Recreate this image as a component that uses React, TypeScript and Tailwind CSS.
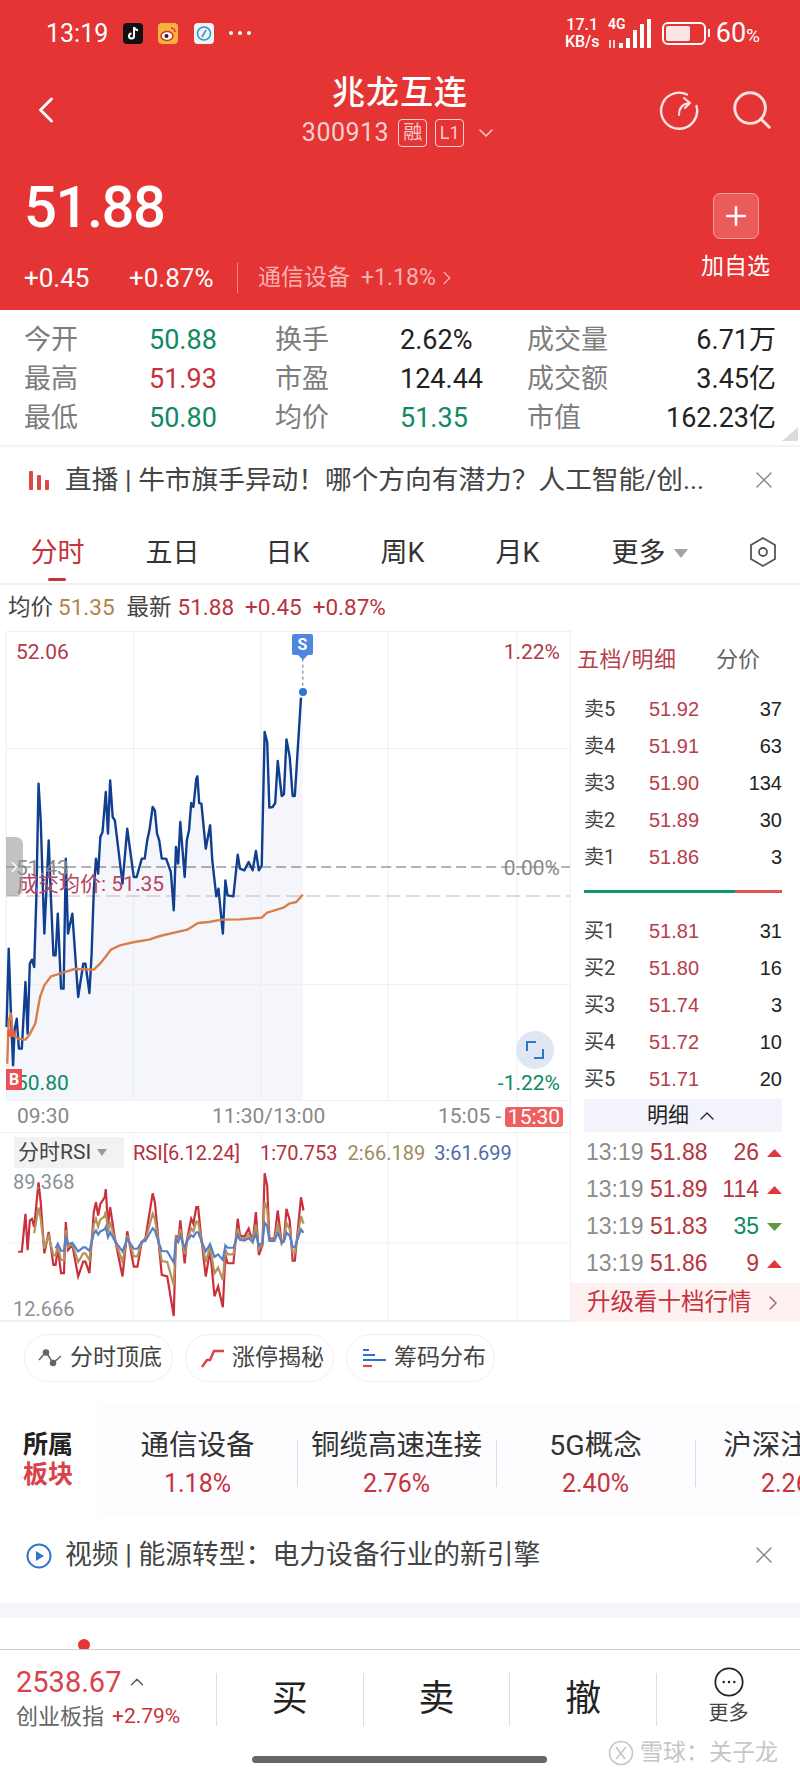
import { ChevronDown, ChevronLeft, ChevronRight, ChevronUp, Plus, Search, X } from "lucide-react";

const stats = [
  ["今开", "50.88", "text-[#0f8a62]", "换手", "2.62%", "text-[#222]", "成交量", "6.71万"],
  ["最高", "51.93", "text-[#c5333d]", "市盈", "124.44", "text-[#222]", "成交额", "3.45亿"],
  ["最低", "50.80", "text-[#0f8a62]", "均价", "51.35", "text-[#0f8a62]", "市值", "162.23亿"],
];

const tabs = ["分时", "五日", "日K", "周K", "月K"];

const sells = [
  ["卖5", "51.92", "37"],
  ["卖4", "51.91", "63"],
  ["卖3", "51.90", "134"],
  ["卖2", "51.89", "30"],
  ["卖1", "51.86", "3"],
];

const buys = [
  ["买1", "51.81", "31"],
  ["买2", "51.80", "16"],
  ["买3", "51.74", "3"],
  ["买4", "51.72", "10"],
  ["买5", "51.71", "20"],
];

const ticks = [
  { price: "51.88", qty: "26", up: true },
  { price: "51.89", qty: "114", up: true },
  { price: "51.83", qty: "35", up: false },
  { price: "51.86", qty: "9", up: true },
];

const boards = [
  ["通信设备", "1.18%"],
  ["铜缆高速连接", "2.76%"],
  ["5G概念", "2.40%"],
  ["沪深注册制", "2.26%"],
];

// traced from the chart, in viewBox units
const priceLine =
  "18,1220 24,985 30,1180 36,1335 40,1230 46,1195 52,1285 60,1285 70,1085 76,1240 82,1030 88,1018 94,1040 100,830 106,490 112,600 122,940 134,660 140,830 147,1005 153,1005 159,880 168,1105 175,1105 181,715 187,940 199,880 215,1130 229,1030 235,1030 246,1118 252,1000 258,810 264,715 270,760 276,650 282,635 291,515 297,640 303,480 310,590 316,600 337,790 350,625 368,770 376,770 390,715 398,715 405,660 411,630 420,560 426,570 432,640 438,660 445,715 457,715 470,755 478,870 484,680 490,730 496,605 508,770 514,660 520,630 526,548 532,560 540,475 543,468 548,548 554,550 566,685 578,615 584,720 595,828 601,805 613,940 620,780 626,825 642,828 654,703 660,745 672,750 684,725 695,750 704,692 712,750 720,735 728,335 735,365 741,562 750,560 757,548 764,422 775,527 781,522 788,357 797,410 805,527 811,527 828,232";

const avgLine =
  "20,1330 24,1200 30,1180 36,1245 50,1255 70,1258 80,1245 97,1210 110,1130 122,1095 140,1068 165,1060 205,1046 258,1048 275,1030 290,1010 305,988 330,975 370,965 410,958 440,947 515,928 545,908 575,905 610,898 660,897 720,892 735,877 780,862 795,850 815,845 833,823";

const rsiRed: [number, number][] = [
  [50, 460], [60, 460], [70, 345], [76, 455], [82, 365], [88, 360], [94, 385], [106, 250], [112, 310], [122, 465], [134, 400], [147, 500], [153, 500], [159, 450], [168, 525], [176, 525], [181, 370], [187, 455], [199, 440], [215, 535], [229, 490], [235, 490], [246, 525], [258, 340], [264, 310], [270, 350], [276, 315], [288, 295], [291, 270], [297, 380], [303, 325], [316, 420], [337, 535], [350, 398], [368, 505], [378, 505], [390, 430], [400, 420], [420, 283], [426, 310], [438, 450], [445, 530], [460, 535], [478, 655], [484, 410], [490, 430], [496, 365], [508, 495], [514, 425], [526, 360], [532, 375], [540, 325], [545, 325], [554, 420], [566, 535], [578, 455], [590, 595], [600, 565], [613, 628], [620, 470], [626, 495], [642, 495], [654, 360], [660, 410], [672, 415], [684, 390], [695, 430], [704, 340], [712, 470], [722, 440], [728, 222], [735, 260], [741, 420], [755, 420], [764, 335], [775, 435], [781, 425], [788, 330], [797, 365], [805, 487], [811, 487], [828, 295], [835, 335],
];

const damp = (from: number, k: number) =>
  rsiRed
    .filter(([x]) => x >= from)
    .map(([x, y]) => `${x},${Math.round(430 + (y - 430) * k)}`)
    .join(" ");

const Row = ({ label, price, qty }: { label: string; price: string; qty: string }) => (
  <div className="flex items-center h-[37px] text-[20px] pl-[13px] pr-[18px]">
    <span className="w-[65px] text-[#444]">{label}</span>
    <span className="text-[#b83d4a] font-['Liberation_Sans','Noto_Sans_CJK_SC',sans-serif]">{price}</span>
    <span className="ml-auto text-[#222] font-['Liberation_Sans','Noto_Sans_CJK_SC',sans-serif]">{qty}</span>
  </div>
);

const App = () => {
  return (
    <div className="w-[800px] h-[1778px] overflow-hidden bg-white relative font-['Roboto','Noto_Sans_CJK_SC',sans-serif]">
      {/* red header */}
      <div className="h-[310px] bg-[#e43434] text-white flex flex-col">
        <div className="h-[66px] flex items-center pl-[46px] pr-[40px]">
          <span className="text-[25px] leading-none w-[77px]">13:19</span>
          <svg width="20" height="21" viewBox="0 0 20 21" className="mr-[15px]">
            <rect width="20" height="21" rx="4" fill="#111" />
            <path d="M11 4v9a2.5 2.5 0 1 1-2.5-2.5M11 4c.5 2 2 3 4 3.2" fill="none" stroke="#fff" strokeWidth="2" />
          </svg>
          <svg width="20" height="21" viewBox="0 0 20 21" className="mr-[16px]">
            <rect width="20" height="21" rx="4" fill="#f6b33c" />
            <ellipse cx="9" cy="13" rx="6" ry="4.5" fill="#fff" stroke="#d8332a" strokeWidth="1.5" />
            <circle cx="8.5" cy="13" r="2" fill="#222" />
            <path d="M13 5a4 4 0 0 1 4 4" fill="none" stroke="#d8332a" strokeWidth="1.5" />
          </svg>
          <svg width="20" height="21" viewBox="0 0 20 21" className="mr-[15px]">
            <rect width="20" height="21" rx="4" fill="#eef4f8" />
            <circle cx="10" cy="10.5" r="6.5" fill="none" stroke="#3f93c4" strokeWidth="1.6" />
            <path d="M8 14l4-7" stroke="#3f93c4" strokeWidth="1.6" />
          </svg>
          <div className="flex gap-[5px]">
            <span className="w-[4px] h-[4px] rounded-full bg-white" />
            <span className="w-[4px] h-[4px] rounded-full bg-white" />
            <span className="w-[4px] h-[4px] rounded-full bg-white" />
          </div>
          <div className="ml-auto flex items-center">
            <div className="text-[16px] leading-[17px] font-medium text-center w-[37px]">
              <div>17.1</div>
              <div>KB/s</div>
            </div>
            <svg width="46" height="34" viewBox="0 0 46 34" className="ml-[6px] mr-[9px]">
              <text x="1" y="13" fontSize="14" fontWeight="600" fill="#fff">4G</text>
              <path d="M3 24v8M7 24v8" stroke="#fff" strokeWidth="1.6" />
              <rect x="12" y="27" width="4" height="5" fill="#fff" />
              <rect x="19" y="22" width="4" height="10" fill="#fff" />
              <rect x="26" y="14" width="4" height="18" fill="#fff" />
              <rect x="33" y="8" width="4" height="24" fill="#fff" />
              <rect x="40" y="3" width="4" height="29" fill="#fff" />
            </svg>
            <div className="w-[44px] h-[23px] rounded-[6px] border-2 border-white p-[2px]">
              <div className="h-full w-[24px] rounded-[2px] bg-[#fbe6e6]" />
            </div>
            <span className="w-[2px] h-[8px] bg-white ml-[2px]" />
            <span className="text-[27px] leading-none ml-[6px]">60</span>
            <span className="text-[19px] leading-none mt-[4px]">%</span>
          </div>
        </div>

        <div className="h-[88px] flex items-center relative">
          <ChevronLeft size={44} strokeWidth={1.6} className="ml-[24px]" />
          <div className="absolute left-0 right-0 top-0 flex flex-col items-center pt-[7px]">
            <div className="text-[33px] leading-[40px] tracking-[1px] font-medium">兆龙互连</div>
            <div className="flex items-center mt-[5px] text-[#f8cfcf]">
              <span className="text-[25px] leading-[30px] tracking-[0.5px]">300913</span>
              <span className="ml-[9px] w-[29px] h-[28px] rounded-[4px] border border-[#f8cfcf] text-[19px] leading-[26px] text-center">融</span>
              <span className="ml-[8px] w-[29px] h-[28px] rounded-[4px] border border-[#f8cfcf] text-[18px] leading-[26px] text-center">L1</span>
              <ChevronDown size={24} strokeWidth={1.5} className="ml-[10px]" />
            </div>
          </div>
          <div className="ml-auto flex items-center gap-[29px] pr-[25px]">
            <svg width="42" height="42" viewBox="0 0 42 42" fill="none" stroke="#fbe3e3" strokeWidth="2.4" strokeLinecap="round">
              <path d="M29 5.5A18 18 0 1 0 38.5 17" />
              <path d="M21 26c0-7 3-11 10-12M26 9l6 5-5 5" strokeWidth="2" />
            </svg>
            <Search size={46} strokeWidth={1.5} color="#fbe3e3" />
          </div>
        </div>

        <div className="flex-1 flex justify-between pl-[24px] pr-[30px]">
          <div>
            <div className="text-[58px] leading-[60px] mt-[23px] font-medium tracking-[-1.5px]">51.88</div>
            <div className="flex items-center mt-[26px] h-[30px]">
              <span className="text-[26px] w-[105px]">+0.45</span>
              <span className="text-[26px] w-[108px]">+0.87%</span>
              <span className="w-px h-[30px] bg-[#f18787] mr-[20px]" />
              <span className="text-[23px] text-[#f7b1b1] mr-[11px]">通信设备</span>
              <span className="text-[23px] text-[#f7b1b1]">+1.18%</span>
              <ChevronRight size={22} strokeWidth={1.5} color="#f7b1b1" />
            </div>
          </div>
          <div className="flex flex-col items-center mt-[39px]">
            <div className="w-[46px] h-[46px] rounded-[7px] bg-[#ec5b5b] border border-[#f49c9c] flex items-center justify-center">
              <Plus size={30} strokeWidth={2} />
            </div>
            <span className="text-[23px] leading-[30px] mt-[13px]">加自选</span>
          </div>
        </div>
      </div>

      {/* stats */}
      <div className="h-[137px] relative border-b-2 border-[#f4f4f4] pt-[11px] pl-[24px] pr-[24px] grid grid-cols-[125px_126px_125px_127px_100px_1fr] auto-rows-[39px] text-[27px] items-center">
        {stats.map((s) => (
          <div key={s[0]} className="contents">
            <span className="text-[#7d7d7d]">{s[0]}</span>
            <span className={s[2]}>{s[1]}</span>
            <span className="text-[#7d7d7d]">{s[3]}</span>
            <span className={s[5]}>{s[4]}</span>
            <span className="text-[#7d7d7d] whitespace-nowrap">{s[6]}</span>
            <span className="text-right text-[#222] whitespace-nowrap">{s[7]}</span>
          </div>
        ))}
        <svg width="16" height="14" className="absolute right-[2px] bottom-[4px]">
          <path d="M16 0V14H0Z" fill="#d9dcdf" />
        </svg>
      </div>

      {/* live banner */}
      <div className="h-[73px] flex items-start pt-[16px] pl-[28px] pr-[22px]">
        <svg width="22" height="26" viewBox="0 0 22 26" className="mr-[15px] mt-[3px]" fill="#d94a46">
          <rect x="1" y="5" width="4" height="19" rx="1" />
          <rect x="9" y="9" width="4" height="15" rx="1" />
          <rect x="17" y="14" width="4" height="10" rx="1" />
        </svg>
        <span className="text-[26.7px] leading-[34px] text-[#444] whitespace-nowrap">直播 | 牛市旗手异动！哪个方向有潜力？人工智能/创...</span>
        <X size={28} strokeWidth={1.3} color="#8a8a8a" className="ml-auto mt-[3px]" />
      </div>

      {/* period tabs */}
      <div className="h-[65px] relative border-b-2 border-[#f2f2f2] flex items-center pt-[3px] text-[27px] text-[#333]">
        {tabs.map((t, i) => (
          <div key={t} className={`w-[115px] text-center relative ${i === 0 ? "text-[#c8323c]" : ""}`}>
            {t}
          </div>
        ))}
        <div className="w-[115px] flex items-center justify-center pl-[34px] whitespace-nowrap">
          更多
          <svg width="14" height="10" className="ml-[8px]">
            <path d="M0 1H14L7 10Z" fill="#a3a3a3" />
          </svg>
        </div>
        <svg width="28" height="32" viewBox="0 0 28 32" fill="none" stroke="#555" strokeWidth="1.8" className="absolute right-[23px] top-[16px]">
          <path d="M14 2l12 7v14l-12 7-12-7V9Z" />
          <circle cx="14" cy="16" r="4" />
        </svg>
        <span className="absolute left-[48px] bottom-[2px] w-[18px] h-[3px] rounded-full bg-[#c8323c]" />
      </div>

      {/* quote line */}
      <div className="h-[46px] flex items-center pl-[8px] text-[22.5px] whitespace-nowrap">
        <span className="text-[#444] mr-[5px]">均价</span>
        <span className="text-[#b5834d] mr-[12px]">51.35</span>
        <span className="text-[#444] mr-[6px]">最新</span>
        <span className="text-[#b8343e] mr-[11px]">51.88</span>
        <span className="text-[#b8343e] mr-[11px]">+0.45</span>
        <span className="text-[#b8343e]">+0.87%</span>
      </div>

      <div className="flex h-[691px]">
        {/* charts */}
        <div className="w-[570px] flex flex-col">
          <div className="h-[470px] relative">
            <svg className="absolute inset-0 w-full h-full" viewBox="0 32 1568 1410" preserveAspectRatio="none">
              <polygon points={`18,1440 ${priceLine} 833,232 833,1440`} fill="#f5f6fc" />
              <g stroke="#eceef2" strokeWidth="1">
                <path d="M17 34H1568M17 385H1568M17 1093H1568M17 1441H1568M17 34V1441" vectorEffect="non-scaling-stroke" />
                <path d="M367 34V1441M718 34V1441M1068 34V1441M1422 34V1441" vectorEffect="non-scaling-stroke" />
              </g>
              <path d="M17 740H1568" stroke="#666" strokeDasharray="10 5" fill="none" vectorEffect="non-scaling-stroke" />
              <path d="M17 827H1568" stroke="#c9b3b8" strokeDasharray="14 6" fill="none" vectorEffect="non-scaling-stroke" />
              <polyline points={priceLine} fill="none" stroke="#113f8f" strokeWidth="2.4" strokeLinejoin="round" vectorEffect="non-scaling-stroke" />
              <polyline points={avgLine} fill="none" stroke="#d9804a" strokeWidth="2.4" strokeLinejoin="round" vectorEffect="non-scaling-stroke" />
              <path d="M833 115V200" stroke="#5b6f92" strokeDasharray="3 3" fill="none" vectorEffect="non-scaling-stroke" />
            </svg>

            <span className="absolute left-[16px] top-[9px] text-[21px] leading-[24px] text-[#b03a48]">52.06</span>
            <span className="absolute right-[10px] top-[9px] text-[21px] leading-[24px] text-[#b03a48]">1.22%</span>
            <span className="absolute left-[16px] top-[225px] text-[21px] leading-[24px] text-[#8a8a8a]">51.43</span>
            <span className="absolute right-[10px] top-[225px] text-[21px] leading-[24px] text-[#8a8a8a]">0.00%</span>
            <span className="absolute left-[17px] top-[241px] text-[21px] leading-[24px] text-[#b8445f]">成交均价: 51.35</span>
            <span className="absolute left-[16px] top-[440px] text-[21px] leading-[24px] text-[#0f8a62]">50.80</span>
            <span className="absolute right-[10px] top-[440px] text-[21px] leading-[24px] text-[#0f8a62]">-1.22%</span>

            {/* collapse handle */}
            <div className="absolute left-[6px] top-[206px] w-[17px] h-[59px] rounded-r-[7px] bg-[#9a9a9a]/60 flex items-center justify-center">
              <ChevronRight size={20} strokeWidth={2} color="#fff" />
            </div>

            {/* S marker */}
            <div className="absolute left-[292px] top-[3px] w-[21px] h-[21px] rounded-[2px] bg-[#4f86e0] text-white text-[16px] leading-[21px] font-bold text-center">S</div>
            <svg width="10" height="5" className="absolute left-[298px] top-[24px]">
              <path d="M0 0H10L5 5Z" fill="#4f86e0" />
            </svg>
            <span className="absolute left-[299px] top-[57px] w-[8px] h-[8px] rounded-full bg-[#2a76d2]" />

            {/* B marker */}
            <span className="absolute left-[7px] top-[398px] w-[8px] h-[8px] rounded-full bg-[#ee5a3a]" />
            <div className="absolute left-[6px] top-[438px] w-[16px] h-[21px] bg-[#ec4f55] text-white text-[16px] leading-[21px] font-bold text-center">B</div>

            {/* expand button */}
            <div className="absolute left-[516px] top-[400px] w-[38px] h-[38px] rounded-full bg-[#dfe7f5] flex items-center justify-center">
              <svg width="20" height="20" viewBox="0 0 20 20" fill="none" stroke="#2f78c8" strokeWidth="2">
                <path d="M11 2H2V11M18 9V18H9" />
              </svg>
            </div>
          </div>

          <div className="h-[32px] flex items-center pl-[17px] pr-[7px] text-[21px] text-[#888] border-b border-[#eceef2]">
            <span className="w-[195px]">09:30</span>
            <span className="w-[226px]">11:30/13:00</span>
            <span>15:05 -</span>
            <span className="ml-auto w-[58px] h-[20px] rounded-[3px] bg-[#ee6060] text-white text-center leading-[20px]">15:30</span>
          </div>

          <div className="flex-1 relative border-b-2 border-[#eef0f3]">
            <svg className="absolute inset-0 w-full h-full" viewBox="0 100 1568 567" preserveAspectRatio="none">
              <path d="M367 100V667M718 100V667M1068 100V667M1422 100V667M17 433H1568" stroke="#f0f1f4" fill="none" vectorEffect="non-scaling-stroke" />
              <polyline points={rsiRed.map((p) => p.join(",")).join(" ")} fill="none" stroke="#c9303a" strokeWidth="2.2" vectorEffect="non-scaling-stroke" />
              <polyline points={damp(94, 0.58)} fill="none" stroke="#b5925c" strokeWidth="2.2" vectorEffect="non-scaling-stroke" />
              <polyline points={damp(153, 0.28)} fill="none" stroke="#5a7fc6" strokeWidth="2.2" vectorEffect="non-scaling-stroke" />
            </svg>
            <div className="relative flex items-center pt-[4px] text-[20px] whitespace-nowrap">
              <div className="ml-[14px] w-[110px] h-[31px] bg-[#f2f2f2] flex items-center pl-[4px] text-[21px] text-[#444]">
                分时RSI
                <svg width="10" height="7" className="ml-[6px]">
                  <path d="M0 0H10L5 7Z" fill="#999" />
                </svg>
              </div>
              <span className="ml-[9px] text-[#b53040]">RSI[6.12.24]</span>
              <span className="ml-[20px] text-[#b53040]">1:70.753</span>
              <span className="ml-[10px] text-[#a08a60]">2:66.189</span>
              <span className="ml-[9px] text-[#4f6ca8]">3:61.699</span>
            </div>
            <span className="absolute left-[13px] top-[37px] text-[20px] leading-[24px] text-[#8a9097]">89.368</span>
            <span className="absolute left-[13px] top-[164px] text-[20px] leading-[24px] text-[#8a9097]">12.666</span>
          </div>
        </div>

        {/* order book */}
        <div className="flex-1 flex flex-col border-l border-[#eceef2]">
          <div className="h-[53px] flex items-center pl-[6px] text-[22px] pt-[4px]">
            <span className="text-[#b8404a] w-[139px] tracking-[0.5px]">五档/明细</span>
            <span className="text-[#666]">分价</span>
          </div>
          <div className="pt-[6px]">
            {sells.map((r) => (
              <Row key={r[0]} label={r[0]} price={r[1]} qty={r[2]} />
            ))}
          </div>
          <div className="ml-[13px] mr-[18px] mt-[15px] h-[3px] flex">
            <span className="w-[151px] bg-[#0f9a63]" />
            <span className="flex-1 bg-[#e2555a]" />
          </div>
          <div className="pt-[19px]">
            {buys.map((r) => (
              <Row key={r[0]} label={r[0]} price={r[1]} qty={r[2]} />
            ))}
          </div>
          <div className="ml-[13px] mr-[18px] h-[33px] mt-[2px] bg-[#f3f4fb] flex items-center justify-center text-[21px] text-[#222]">
            明细
            <ChevronUp size={24} strokeWidth={1.3} className="ml-[6px]" />
          </div>
          <div className="pt-[2px] font-['Liberation_Sans','Noto_Sans_CJK_SC',sans-serif]">
            {ticks.map((t) => (
              <div key={t.price} className="h-[37px] flex items-center pl-[15px] pr-[18px] text-[23px]">
                <span className="w-[64px] text-[#8c8c8c]">13:19</span>
                <span className="text-[#b8343e]">{t.price}</span>
                <span className={`ml-auto ${t.up ? "text-[#b8343e]" : "text-[#0f8a62]"}`}>{t.qty}</span>
                <svg width="15" height="8" className="ml-[8px]">
                  {t.up ? <path d="M0 8H15L7.5 0Z" fill="#e0383c" /> : <path d="M0 0H15L7.5 8Z" fill="#5d9a3c" />}
                </svg>
              </div>
            ))}
          </div>
          <div className="flex-1 mt-[1px] bg-[#fdf1f2] flex items-center pl-[16px] pr-[15px] text-[23.5px] text-[#c8323c]">
            升级看十档行情
            <ChevronRight size={24} strokeWidth={1.5} color="#b0666c" className="ml-auto" />
          </div>
        </div>
      </div>

      {/* feature chips */}
      <div className="h-[81px] flex gap-[12px] pl-[24px] pt-[12px] whitespace-nowrap">
        <div className="w-[149px] h-[48px] rounded-full border border-[#efefef] flex items-center pl-[12px] text-[23px] text-[#444]">
          <svg width="26" height="18" viewBox="0 0 26 18" className="mr-[7px]" fill="none" stroke="#666" strokeWidth="1.5">
            <path d="M2 11L9 3L16 14L24 7" />
            <circle cx="9" cy="3.5" r="2.5" fill="#666" />
            <circle cx="16" cy="14" r="2.5" fill="#666" />
          </svg>
          分时顶底
        </div>
        <div className="w-[149px] h-[48px] rounded-full border border-[#efefef] flex items-center pl-[15px] text-[23px] text-[#444]">
          <svg width="24" height="20" viewBox="0 0 24 20" className="mr-[7px]" fill="none" stroke="#d9424a" strokeWidth="2.4">
            <path d="M1 19L6 12H9L13 3H23" />
          </svg>
          涨停揭秘
        </div>
        <div className="w-[149px] h-[48px] rounded-full border border-[#efefef] flex items-center pl-[15px] text-[23px] text-[#444]">
          <svg width="24" height="20" viewBox="0 0 24 20" className="mr-[8px]" fill="none" strokeWidth="2.2">
            <path d="M1 2H7M1 7H13M1 12H24" stroke="#2f6fcf" />
            <path d="M1 18H10" stroke="#e0474f" />
          </svg>
          筹码分布
        </div>
      </div>

      {/* boards */}
      <div className="h-[114px] flex">
        <div className="w-[98px] pl-[23px] pt-[27px] text-[25px] leading-[30px] font-bold shrink-0">
          <div className="text-[#222]">所属</div>
          <div className="text-[#d9424a]">板块</div>
        </div>
        <div className="flex-1 bg-[#fdfcfe] flex overflow-hidden">
          {boards.map((b, i) => (
            <div key={b[0]} className={`w-[199px] shrink-0 flex flex-col items-center pt-[26px] ${i > 0 ? "relative" : ""}`}>
              {i > 0 && <span className="absolute left-0 top-[37px] w-px h-[47px] bg-[#dcdde2]" />}
              <span className="text-[28.5px] leading-[34px] text-[#333] whitespace-nowrap">{b[0]}</span>
              <span className="text-[25px] leading-[28px] mt-[7px] text-[#c8323c]">{b[1]}</span>
            </div>
          ))}
        </div>
      </div>

      {/* video banner */}
      <div className="h-[86px] flex items-start pt-[21px] pl-[26px] pr-[22px]">
        <svg width="26" height="26" viewBox="0 0 26 26" className="mr-[13px] mt-[5px]">
          <circle cx="13" cy="13" r="11.5" fill="none" stroke="#2f78c8" strokeWidth="2" />
          <path d="M10 8l8 5-8 5Z" fill="#2f78c8" />
        </svg>
        <span className="text-[26.8px] leading-[34px] text-[#444] whitespace-nowrap">视频 | 能源转型：电力设备行业的新引擎</span>
        <X size={28} strokeWidth={1.3} color="#8a8a8a" className="ml-auto mt-[3px]" />
      </div>

      <div className="h-[15px] bg-[#f5f6fa]" />
      <div className="h-[31px] relative">
        <span className="absolute left-[78px] top-[21px] w-[12px] h-[12px] rounded-full bg-[#e43434]" />
      </div>

      {/* bottom bar */}
      <div className="h-[129px] relative border-t border-[#cfcfcf] bg-white">
        <div className="h-[76px] flex items-center pl-[16px] pt-[22px]">
          <div className="w-[200px] whitespace-nowrap">
            <div className="flex items-center">
              <span className="text-[29px] leading-[34px] text-[#d9424a]">2538.67</span>
              <ChevronUp size={22} strokeWidth={1.5} color="#555" className="ml-[5px]" />
            </div>
            <div className="flex items-center mt-[2px]">
              <span className="text-[22px] leading-[30px] text-[#666]">创业板指</span>
              <span className="ml-[8px] text-[21px] text-[#c8323c]">+2.79%</span>
            </div>
          </div>
          {["买", "卖", "撤"].map((a) => (
            <div key={a} className="w-[147px] h-[53px] border-l border-[#ddd] flex items-center justify-center text-[36px] text-[#222]">
              {a}
            </div>
          ))}
          <div className="w-[144px] h-[53px] border-l border-[#ddd] flex flex-col items-center">
            <svg width="34" height="34" viewBox="0 0 34 34" className="-mt-[6px]">
              <circle cx="17" cy="17" r="15.5" fill="none" stroke="#222" strokeWidth="2" />
              <circle cx="11" cy="17" r="1.4" fill="#222" />
              <circle cx="17" cy="17" r="1.4" fill="#222" />
              <circle cx="23" cy="17" r="1.4" fill="#222" />
            </svg>
            <span className="text-[20px] leading-[26px] mt-[3px] text-[#444]">更多</span>
          </div>
        </div>
        <span className="absolute left-[252px] top-[106px] w-[295px] h-[7px] rounded-full bg-[#666]" />
        <div className="absolute left-[608px] top-[88px] flex items-center text-[#c6c6c6]">
          <svg width="26" height="26" viewBox="0 0 26 26" fill="none" stroke="#c6c6c6" strokeWidth="1.6" className="mr-[6px]">
            <circle cx="13" cy="13" r="11.5" />
            <path d="M8 7l9 12M18 7L8 19" />
          </svg>
          <span className="text-[23px] leading-[30px] whitespace-nowrap">雪球：关子龙</span>
        </div>
      </div>
    </div>
  );
};

export default App;
